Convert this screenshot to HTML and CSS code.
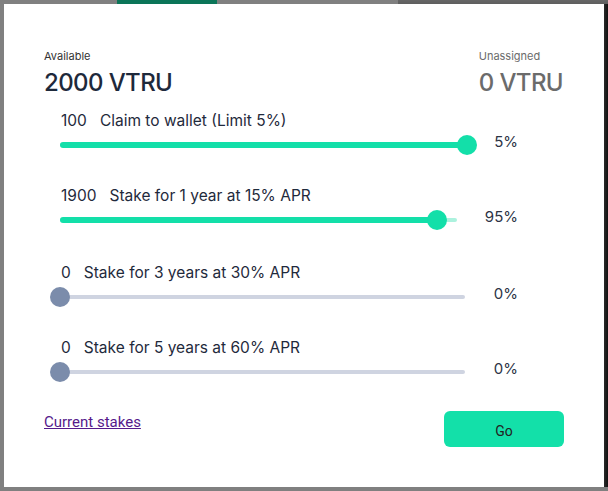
FILE: index.html
```html
<!DOCTYPE html>
<html>
<head>
<meta charset="utf-8">
<link rel="stylesheet" href="styles.css">
</head>
<body>
<div class="modal">
  <div class="header">
    <div class="stat">
      <div class="stat-label">Available</div>
      <div class="stat-value">2000 VTRU</div>
    </div>
    <div class="stat stat-muted">
      <div class="stat-label">Unassigned</div>
      <div class="stat-value">0 VTRU</div>
    </div>
  </div>

  <div class="rows">
    <div class="row">
      <div class="row-label"><span class="amt">100</span>Claim to wallet (Limit 5%)</div>
      <div class="slider slider-w1 active">
        <div class="track"></div>
        <div class="fill" style="width:100%"></div>
        <div class="thumb" style="left:100%"></div>
      </div>
      <div class="pct">5%</div>
    </div>
    <div class="row">
      <div class="row-label"><span class="amt">1900</span>Stake for 1 year at 15% APR</div>
      <div class="slider slider-w2 active">
        <div class="track"></div>
        <div class="fill" style="width:95%"></div>
        <div class="thumb" style="left:95%"></div>
      </div>
      <div class="pct">95%</div>
    </div>
    <div class="row row-spaced">
      <div class="row-label"><span class="amt">0</span>Stake for 3 years at 30% APR</div>
      <div class="slider slider-w3">
        <div class="track"></div>
        <div class="thumb" style="left:0%"></div>
      </div>
      <div class="pct">0%</div>
    </div>
    <div class="row">
      <div class="row-label"><span class="amt">0</span>Stake for 5 years at 60% APR</div>
      <div class="slider slider-w3">
        <div class="track"></div>
        <div class="thumb" style="left:0%"></div>
      </div>
      <div class="pct">0%</div>
    </div>
  </div>

  <div class="footer">
    <a class="link" href="#">Current stakes</a>
    <button class="go">Go</button>
  </div>
</div>
</body>
</html>
```

FILE: styles.css
```css
html, body {
  margin: 0;
  padding: 0;
}
body {
  width: 608px;
  height: 491px;
  overflow: hidden;
  background:
    linear-gradient(#0b7558, #0b7558) 117px 0 / 100px 4px no-repeat,
    linear-gradient(#666, #5e5e5e) 398px 0 / 210px 4px no-repeat,
    linear-gradient(90deg, #2a2a2a, #111) 604px 0 / 4px 487px no-repeat,
    #808080;
  font-family: Inter, "Noto Sans", sans-serif;
  color: #1f2937;
}
.modal {
  box-sizing: border-box;
  width: 600px;
  height: 483px;
  margin: 4px 4px 4px 4px;
  background: #fff;
  padding: 45px 40px 0 40px;
}
.header {
  display: flex;
  justify-content: space-between;
}
.stat-label {
  font-size: 11px;
  line-height: 14px;
  color: #333;
}
.stat-value {
  margin-top: 5px;
  font-size: 24px;
  line-height: 30px;
  font-weight: 500;
  letter-spacing: -0.6px;
  color: #1e293b;
}
.stat-muted { padding-left: 2px; }
.stat-muted .stat-label { color: #6b6b6b; }
.stat-muted .stat-value { color: #6b6b6b; margin-right: 1px; }

.rows {
  margin-top: 13px;
  padding-left: 16px;
  display: flex;
  flex-direction: column;
  gap: 31px;
}
.row {
  display: grid;
  grid-template-columns: 411px 47px;
  grid-template-rows: 20px 20px;
  row-gap: 4px;
}
.row-spaced {
  margin-top: 2px;
}
.row-label {
  grid-column: 1 / 3;
  font-size: 15.5px;
  line-height: 20px;
  padding-left: 1px;
  color: #1f2a3c;
  white-space: nowrap;
}
.amt {
  margin-right: 13px;
}
.slider {
  position: relative;
  height: 20px;
}
.slider-w1 { width: 407px; }
.slider-w2 { width: 397px; }
.slider-w3 { width: 405px; }
.track {
  position: absolute;
  left: 0;
  right: 0;
  top: 8px;
  height: 4px;
  border-radius: 2px;
  background: #cfd4e1;
}
.active .track { background: #acf2de; }
.fill {
  position: absolute;
  left: 0;
  top: 7px;
  height: 6px;
  border-radius: 3px;
  background: #13dfa9;
}
.thumb {
  position: absolute;
  top: 0;
  width: 20px;
  height: 20px;
  border-radius: 50%;
  background: #7b8cab;
  transform: translateX(-50%);
}
.active .thumb { background: #13dfa9; }
.pct {
  text-align: right;
  font-size: 15px;
  line-height: 20px;
  margin-top: -3px;
  color: #2c3345;
}
.footer {
  margin-top: 29px;
  display: flex;
  justify-content: space-between;
  align-items: flex-start;
}
.link {
  margin-top: 3px;
  font-family: Roboto, "Liberation Sans", sans-serif;
  font-size: 15px;
  line-height: 16px;
  color: #551a8b;
  text-decoration: underline;
}
.go {
  width: 120px;
  height: 36px;
  border: none;
  border-radius: 6px;
  background: #13e0a9;
  font-family: Roboto, "Liberation Sans", sans-serif;
  font-size: 14px;
  color: #222;
  padding: 0;
  padding-top: 3px;
}
```
